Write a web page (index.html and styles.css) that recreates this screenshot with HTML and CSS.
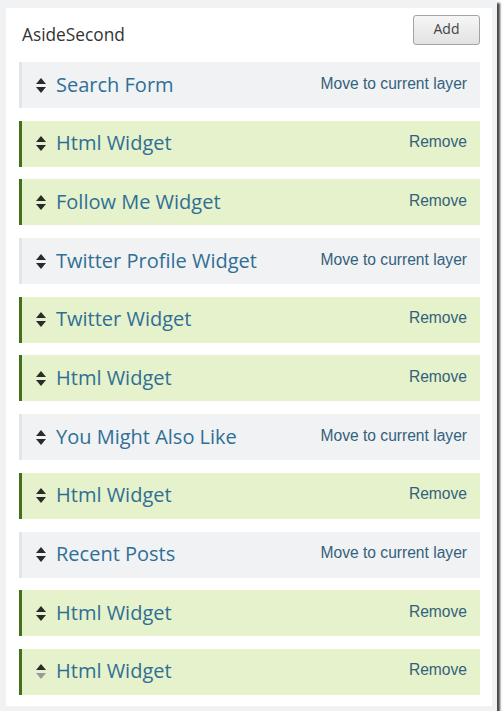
FILE: index.html
```html
<!DOCTYPE html>
<html>
<head>
<meta charset="utf-8">
<link rel="stylesheet" href="styles.css">
</head>
<body>
<div class="frame">
  <div class="panel">
    <div class="header">
      <span class="title">AsideSecond</span>
      <button class="add">Add</button>
    </div>
    <div class="list">
      <div class="row other"><span class="sort"><i class="up"></i><i class="down"></i></span><span class="name">Search Form</span><a class="action">Move to current layer</a></div>
      <div class="row mine"><span class="sort"><i class="up"></i><i class="down"></i></span><span class="name">Html Widget</span><a class="action">Remove</a></div>
      <div class="row mine"><span class="sort"><i class="up"></i><i class="down"></i></span><span class="name">Follow Me Widget</span><a class="action">Remove</a></div>
      <div class="row other"><span class="sort"><i class="up"></i><i class="down"></i></span><span class="name">Twitter Profile Widget</span><a class="action">Move to current layer</a></div>
      <div class="row mine"><span class="sort"><i class="up"></i><i class="down"></i></span><span class="name">Twitter Widget</span><a class="action">Remove</a></div>
      <div class="row mine"><span class="sort"><i class="up"></i><i class="down"></i></span><span class="name">Html Widget</span><a class="action">Remove</a></div>
      <div class="row other"><span class="sort"><i class="up"></i><i class="down"></i></span><span class="name">You Might Also Like</span><a class="action">Move to current layer</a></div>
      <div class="row mine"><span class="sort"><i class="up"></i><i class="down"></i></span><span class="name">Html Widget</span><a class="action">Remove</a></div>
      <div class="row other"><span class="sort"><i class="up"></i><i class="down"></i></span><span class="name">Recent Posts</span><a class="action">Move to current layer</a></div>
      <div class="row mine"><span class="sort"><i class="up"></i><i class="down"></i></span><span class="name">Html Widget</span><a class="action">Remove</a></div>
      <div class="row mine"><span class="sort"><i class="up"></i><i class="down disabled"></i></span><span class="name">Html Widget</span><a class="action">Remove</a></div>
    </div>
  </div>
</div>
</body>
</html>
```
FILE: styles.css
```css
html, body {
  margin: 0;
  padding: 0;
  background: #ffffff;
}
.frame {
  width: 497px;
  height: 711px;
  box-sizing: border-box;
  background: #f1f2f4;
  padding: 8px 5px 5px 6px;
  box-shadow: 3px 3px 2px #4a4a4a;
}
.panel {
  background: #ffffff;
  height: 100%;
  box-sizing: border-box;
  padding: 7px 12px 0 13px;
}
.header {
  display: flex;
  align-items: center;
  justify-content: space-between;
  height: 30px;
  margin-bottom: 17px;
}
.title {
  font-family: "Open Sans", sans-serif;
  font-size: 17.3px;
  color: #333333;
  padding-left: 3px;
  margin-top: 9px;
}
.add {
  width: 67px;
  height: 30px;
  border: 1px solid #a3a3a3;
  border-radius: 3px;
  background: linear-gradient(#f6f6f6, #e2e2e2);
  font-family: "Open Sans", sans-serif;
  font-size: 14px;
  color: #444444;
  padding: 0 0 4px;
}
.list {
  display: flex;
  flex-direction: column;
  gap: 12.7px;
}
.row {
  display: flex;
  align-items: center;
  height: 46px;
  box-sizing: border-box;
  padding: 0 13px 0 0;
  border-left: 3px solid;
}
.row.other {
  background: #f1f2f4;
  border-left-color: #e3e5e8;
}
.row.mine {
  background: #e6f2cb;
  border-left-color: #42701f;
}
.sort {
  display: flex;
  flex-direction: column;
  align-items: center;
  gap: 3px;
  width: 11px;
  margin-left: 13px;
  margin-right: 10px;
}
.sort i {
  display: block;
  width: 0;
  height: 0;
  border-left: 5.5px solid transparent;
  border-right: 5.5px solid transparent;
}
.sort .up {
  border-bottom: 6px solid #2b2b2b;
}
.sort .down {
  border-top: 6px solid #2b2b2b;
}
.sort .down.disabled {
  border-top-color: #9a9a9a;
}
.name {
  flex: 1;
  font-family: "Open Sans", sans-serif;
  font-size: 20px;
  color: #2f6f95;
  padding-bottom: 2px;
}
.action {
  font-family: "Liberation Sans", Arial, sans-serif;
  font-size: 15.6px;
  color: #33617c;
  padding-bottom: 3px;
}
```
